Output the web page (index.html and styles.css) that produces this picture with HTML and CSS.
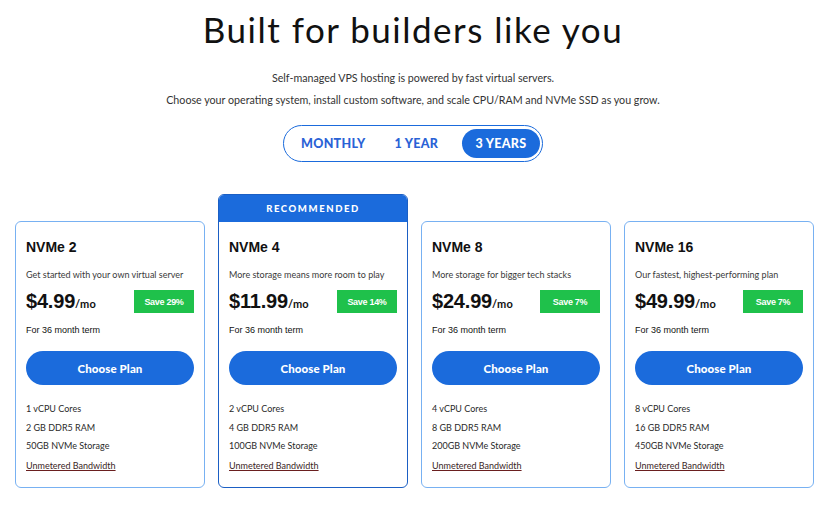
FILE: index.html
```html
<!DOCTYPE html>
<html lang="en">
<head>
<meta charset="utf-8">
<title>Built for builders like you</title>
<link rel="stylesheet" href="styles.css">
</head>
<body>
<main class="page">
  <h1 class="title">Built for builders like you</h1>
  <p class="sub sub-first">Self-managed VPS hosting is powered by fast virtual servers.</p>
  <p class="sub">Choose your operating system, install custom software, and scale CPU/RAM and NVMe SSD as you grow.</p>

  <div class="toggle">
    <button class="tab">MONTHLY</button>
    <button class="tab">1 YEAR</button>
    <button class="tab active">3 YEARS</button>
  </div>

  <section class="plans">
    <article class="card">
      <div class="body">
        <h2 class="name">NVMe 2</h2>
        <p class="desc">Get started with your own virtual server</p>
        <div class="price-row">
          <div class="price">$4.99<span class="per">/mo</span></div>
          <span class="save">Save 29%</span>
        </div>
        <p class="term">For 36 month term</p>
        <button class="choose">Choose Plan</button>
        <ul class="features">
          <li>1 vCPU Cores</li>
          <li>2 GB DDR5 RAM</li>
          <li>50GB NVMe Storage</li>
          <li><a class="bw" href="#">Unmetered Bandwidth</a></li>
        </ul>
      </div>
    </article>

    <article class="card recommended">
      <div class="ribbon">RECOMMENDED</div>
      <div class="body">
        <h2 class="name">NVMe 4</h2>
        <p class="desc">More storage means more room to play</p>
        <div class="price-row">
          <div class="price">$11.99<span class="per">/mo</span></div>
          <span class="save">Save 14%</span>
        </div>
        <p class="term">For 36 month term</p>
        <button class="choose">Choose Plan</button>
        <ul class="features">
          <li>2 vCPU Cores</li>
          <li>4 GB DDR5 RAM</li>
          <li>100GB NVMe Storage</li>
          <li><a class="bw" href="#">Unmetered Bandwidth</a></li>
        </ul>
      </div>
    </article>

    <article class="card">
      <div class="body">
        <h2 class="name">NVMe 8</h2>
        <p class="desc">More storage for bigger tech stacks</p>
        <div class="price-row">
          <div class="price">$24.99<span class="per">/mo</span></div>
          <span class="save">Save 7%</span>
        </div>
        <p class="term">For 36 month term</p>
        <button class="choose">Choose Plan</button>
        <ul class="features">
          <li>4 vCPU Cores</li>
          <li>8 GB DDR5 RAM</li>
          <li>200GB NVMe Storage</li>
          <li><a class="bw" href="#">Unmetered Bandwidth</a></li>
        </ul>
      </div>
    </article>

    <article class="card">
      <div class="body">
        <h2 class="name">NVMe 16</h2>
        <p class="desc">Our fastest, highest-performing plan</p>
        <div class="price-row">
          <div class="price">$49.99<span class="per">/mo</span></div>
          <span class="save">Save 7%</span>
        </div>
        <p class="term">For 36 month term</p>
        <button class="choose">Choose Plan</button>
        <ul class="features">
          <li>8 vCPU Cores</li>
          <li>16 GB DDR5 RAM</li>
          <li>450GB NVMe Storage</li>
          <li><a class="bw" href="#">Unmetered Bandwidth</a></li>
        </ul>
      </div>
    </article>
  </section>
</main>
</body>
</html>
```

FILE: styles.css
```css
* { box-sizing: border-box; }

html, body {
  margin: 0;
  padding: 0;
  background: #ffffff;
}

body {
  font-family: "Lato", "Liberation Sans", Arial, sans-serif;
  color: #1a1a1a;
}

.page {
  display: flex;
  flex-direction: column;
  align-items: center;
  padding-top: 8px;
}

.title {
  margin: 0;
  font-family: "Lato", sans-serif;
  font-weight: 400;
  font-size: 35px;
  line-height: 42px;
  color: #111;
  letter-spacing: 1.5px;
}

.sub {
  margin: 0;
  font-size: 10.7px;
  line-height: 14px;
  color: #333;
}

.sub-first { margin-top: 21px; }
.sub + .sub { margin-top: 8px; }

.toggle {
  margin-top: 18px;
  width: 260px;
  height: 37px;
  border: 1px solid #1b6bdc;
  border-radius: 19px;
  display: flex;
  align-items: center;
  justify-content: space-between;
  padding: 0 2px 0 12px;
}

.tab {
  border: 0;
  background: transparent;
  font-family: "Lato", sans-serif;
  font-weight: 900;
  font-size: 12.5px;
  letter-spacing: 0.3px;
  color: #2a62d6;
  padding: 0 5px;
  height: 29px;
  border-radius: 15px;
}

.tab.active {
  background: #1b6bdc;
  color: #fff;
  width: 78px;
}

.plans {
  margin-top: 32px;
  display: grid;
  grid-template-columns: repeat(4, 190px);
  column-gap: 13px;
  align-items: end;
  padding-left: 3px;
}

.card {
  border: 1px solid #78b1f2;
  border-radius: 6px;
  overflow: hidden;
  background: #fff;
}

.card.recommended {
  border-color: #1b5fc4;
}

.ribbon {
  height: 27px;
  background: #1b6bdc;
  color: #fff;
  font-weight: 900;
  font-size: 9.5px;
  letter-spacing: 1.6px;
  display: flex;
  align-items: center;
  justify-content: center;
}

.body {
  padding: 15px 10px 15px 10px;
}

.name {
  margin: 0;
  font-family: "Liberation Sans", Arial, sans-serif;
  font-weight: 700;
  font-size: 14px;
  line-height: 20px;
  color: #111;
}

.desc {
  margin: 12px 0 0;
  font-size: 9px;
  line-height: 12px;
  color: #3a3a3a;
}

.price-row {
  margin-top: 9px;
  display: flex;
  align-items: center;
  justify-content: space-between;
  height: 23px;
}

.price {
  font-family: "Liberation Sans", Arial, sans-serif;
  font-weight: 700;
  font-size: 20px;
  color: #111;
  letter-spacing: -0.2px;
}

.per {
  font-family: "Lato", sans-serif;
  font-weight: 700;
  font-size: 11px;
  letter-spacing: 0.2px;
}

.save {
  width: 60px;
  height: 23px;
  background: #1fc14b;
  color: #fff;
  font-family: "Liberation Sans", Arial, sans-serif;
  font-weight: 700;
  font-size: 9px;
  letter-spacing: -0.3px;
  display: flex;
  align-items: center;
  justify-content: center;
}

.term {
  margin: 11px 0 0;
  font-family: "Liberation Sans", Arial, sans-serif;
  font-size: 9px;
  line-height: 12px;
  color: #111;
}

.choose {
  margin-top: 15px;
  width: 100%;
  height: 34px;
  border: 0;
  border-radius: 17px;
  background: #1b6bdc;
  color: #fff;
  font-family: "Lato", sans-serif;
  font-weight: 900;
  font-size: 11.5px;
  letter-spacing: 0.1px;
}

.features {
  list-style: none;
  margin: 18px 0 0;
  padding: 0;
  font-size: 9px;
  color: #2a2a2a;
}

.features li {
  line-height: 12px;
  height: 12px;
}

.features li + li { margin-top: 6.5px; }
.features li:last-child { margin-top: 8px; }

.bw {
  color: #3a2424;
  text-decoration: underline;
  text-decoration-color: #6a1f1f;
}
```
